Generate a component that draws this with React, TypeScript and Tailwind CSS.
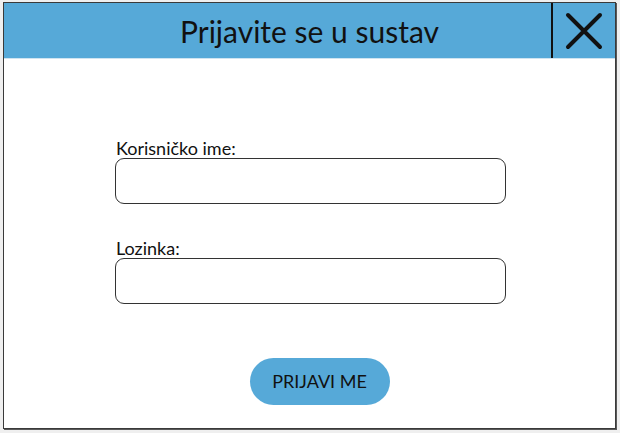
import React from "react";

export default function App() {
  return (
    <div className="w-[620px] h-[433px] bg-[#efefef] pt-[2px] pl-[3px]" style={{ fontFamily: "Lato, 'Open Sans', sans-serif" }}>
      <div className="w-[613px] h-[427px] bg-white border border-[#3a3a3a] shadow-[1px_1px_0_#5a5a5a] flex flex-col">
        <div className="h-[56px] bg-[#56a9d8] flex items-stretch border-b border-[#cfe4f1]">
          <div className="flex-1 flex items-center justify-center pl-[64px] pt-[1px]">
            <span className="text-[30px] text-[#111] leading-none">Prijavite se u sustav</span>
          </div>
          <div className="w-[2px] bg-[#111]" />
          <div className="w-[62px] flex items-center justify-center">
            <svg width="38" height="38" viewBox="0 0 38 38" fill="none">
              <path d="M3 3 L35 35 M35 3 L3 35" stroke="#111" strokeWidth="4" strokeLinecap="round" />
            </svg>
          </div>
        </div>
        <div className="flex-1 flex flex-col pl-[111px] pt-[79px]">
          <label className="text-[18px] text-[#111] leading-none h-[21px] pl-[1px] pt-[1px]">Korisničko ime:</label>
          <div className="w-[391px] h-[46px] rounded-[9px] border border-[#333] mt-[-1px]" />
          <label className="text-[18px] text-[#111] leading-none h-[21px] pl-[1px] pt-[1px] mt-[34px]">Lozinka:</label>
          <div className="w-[391px] h-[46px] rounded-[9px] border border-[#333] mt-[-1px]" />
          <div className="w-[391px] flex justify-center mt-[54px]">
            <button className="w-[140px] h-[47px] rounded-full bg-[#56a9d8] text-[18px] text-[#111] ml-[18px]">PRIJAVI ME</button>
          </div>
        </div>
      </div>
    </div>
  );
}
